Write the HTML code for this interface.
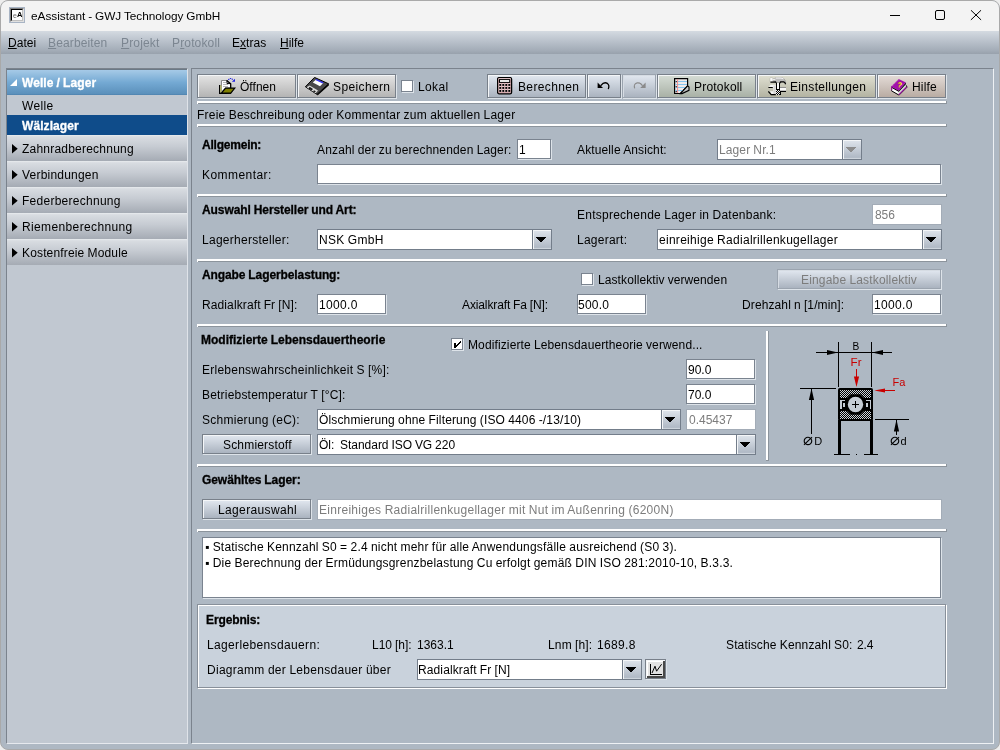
<!DOCTYPE html>
<html lang="de"><head><meta charset="utf-8"><title>eAssistant - GWJ Technology GmbH</title>
<style>
html,body{margin:0;padding:0;}
body{width:1000px;height:750px;overflow:hidden;background:#ededed;font-family:"Liberation Sans","DejaVu Sans",sans-serif;font-size:12px;line-height:14px;color:#000;position:relative;}
#win{position:absolute;left:0;top:0;width:998px;height:748px;border:1px solid #a9a9a9;border-radius:8px;overflow:hidden;background:#aeb8c3;}
#win div,#win svg,#win i{position:absolute;box-sizing:border-box;white-space:nowrap;}
#title{left:-1px;top:-1px;width:1000px;height:31px;background:#f3f3f3;}
#menu{left:-1px;top:30px;width:1000px;height:23px;background:linear-gradient(#d4dae1 0%,#b9c1cb 45%,#a3acb7 85%,#98a1ac 100%);}
.dis{color:#7c8691;}
u{text-decoration:underline;text-underline-offset:1px;}
.t{line-height:14px;will-change:transform;word-spacing:-0.34px;}
.b{font-weight:bold;-webkit-text-stroke:0.3px currentColor;}
.w{color:#fff;}
.g{color:#7c7c7c;}
.fld{background:#fff;border:1px solid #7a838f;box-shadow:1px 1px 0 #dde3e9;}
.fld.off{border-color:#a3acb7;box-shadow:none;}
.btn{border:1px solid #78808a;box-shadow:1px 1px 0 #dde3e9;}
.btn.off{border-color:#9ba4af;}
.btn.off i{border-color:#d6dce3;}
.btn i{left:0;top:0;right:0;bottom:0;border-left:1px solid #f4f6f8;border-top:1px solid #f4f6f8;}
.sep{left:196px;width:750px;height:3px;background:#fff;border-bottom:1px solid #8c949c;border-right:1px solid #8c949c;}
.sep:before{content:"";position:absolute;left:0;bottom:-1px;width:1px;height:1px;background:#fff;}
.cb{width:12px;height:12px;background:#fff;border:1px solid #7a838f;box-shadow:1px 1px 0 #dde3e9;}
.arrow{width:0;height:0;border-left:5px solid transparent;border-right:5px solid transparent;border-top:6px solid #000;}
.cmb{background:#fff;border:1px solid #737d8a;}
.cbtn{width:19px;border-left:1px solid #737d8a;background:linear-gradient(#dfe5ec,#b0b9c5 92%,#ccd3db 93%);}
.cbtn i{left:0;top:0;right:0;bottom:0;border-left:1px solid #f4f6f8;border-top:1px solid #f4f6f8;}
</style></head>
<body>
<div id="win">
<div id="title"></div>
<div id="ticon" style="left:8px;top:6px;width:16px;height:16px;background:#a8b4c4;"><div style="left:1px;top:1px;width:14px;height:14px;border:1px solid #e0e0e0;border-top-color:#808080;border-left-color:#808080;"></div><div style="left:2px;top:2px;width:12px;height:12px;background:#fff;border:1px solid #c0c0c0;border-top-color:#000;border-left-color:#000;"></div><div style="left:3.6px;top:5.4px;font-size:7px;line-height:8px;color:#666;will-change:transform;">e</div><div style="left:7.6px;top:4px;font-size:7.5px;line-height:8px;font-weight:bold;color:#000;will-change:transform;">A</div></div>
<div class="t " style="left:30px;top:8px;letter-spacing:-0.016px;font-size:11.8px;">eAssistant - GWJ Technology GmbH</div>
<div style="left:889px;top:14px;width:10px;height:1px;background:#000;"></div>
<div style="left:934px;top:9px;width:10px;height:10px;border:1px solid #000;border-radius:2px;"></div>
<svg style="left:969px;top:9px;" width="12" height="12" viewBox="0 0 12 12"><path d="M0.9 0.2L11.1 9.9M11.1 0.2L0.9 9.9" stroke="#000" stroke-width="1" fill="none"/></svg>
<div id="menu"></div>
<div class="t " style="left:7px;top:35px;letter-spacing:0.050px;"><u>D</u>atei</div>
<div class="t dis" style="left:47px;top:35px;letter-spacing:0.133px;"><u>B</u>earbeiten</div>
<div class="t dis" style="left:120px;top:35px;letter-spacing:0.167px;"><u>P</u>rojekt</div>
<div class="t dis" style="left:171px;top:35px;letter-spacing:0.150px;">P<u>r</u>otokoll</div>
<div class="t " style="left:231px;top:35px;letter-spacing:0.040px;">E<u>x</u>tras</div>
<div class="t " style="left:279px;top:35px;"><u>H</u>ilfe</div>
<div style="left:5px;top:67px;width:182px;height:676px;background:#c1c8d1;border-left:1px solid #7b838d;border-top:1px solid #7b838d;border-right:1px solid #dfe3e9;border-bottom:1px solid #e6e9ee;"></div>
<div style="left:6px;top:68px;width:180px;height:26px;border-top:1px solid #6b7986;background:linear-gradient(#a6cae7 0%,#74a9d3 50%,#5c91bc 94%,#4e82ae 100%);"></div>
<div style="left:9px;top:78px;width:0;height:0;border-left:7px solid transparent;border-bottom:7px solid #fff;"></div>
<div class="t b w" style="left:21px;top:75px;letter-spacing:0.083px;">Welle / Lager</div>
<div class="t " style="left:21px;top:98px;letter-spacing:0.350px;">Welle</div>
<div style="left:6px;top:114px;width:180px;height:20px;background:#0f4c8a;"></div>
<div class="t b w" style="left:21px;top:118px;letter-spacing:0.075px;">Wälzlager</div>
<div style="left:6px;top:134px;width:180px;height:26px;background:linear-gradient(#e9ecef 0%,#d8dce1 7%,#c6cbd2 45%,#a5abb4 100%);"></div>
<svg style="left:11px;top:143px;" width="7" height="10" viewBox="0 0 7 10"><path d="M0 0L5.7 4.7L0 9.4Z" fill="#000"/></svg>
<div class="t " style="left:21px;top:141px;letter-spacing:0.219px;">Zahnradberechnung</div>
<div style="left:6px;top:160px;width:180px;height:26px;background:linear-gradient(#e9ecef 0%,#d8dce1 7%,#c6cbd2 45%,#a5abb4 100%);"></div>
<svg style="left:11px;top:169px;" width="7" height="10" viewBox="0 0 7 10"><path d="M0 0L5.7 4.7L0 9.4Z" fill="#000"/></svg>
<div class="t " style="left:21px;top:167px;letter-spacing:0.209px;">Verbindungen</div>
<div style="left:6px;top:186px;width:180px;height:26px;background:linear-gradient(#e9ecef 0%,#d8dce1 7%,#c6cbd2 45%,#a5abb4 100%);"></div>
<svg style="left:11px;top:195px;" width="7" height="10" viewBox="0 0 7 10"><path d="M0 0L5.7 4.7L0 9.4Z" fill="#000"/></svg>
<div class="t " style="left:21px;top:193px;letter-spacing:0.264px;">Federberechnung</div>
<div style="left:6px;top:212px;width:180px;height:26px;background:linear-gradient(#e9ecef 0%,#d8dce1 7%,#c6cbd2 45%,#a5abb4 100%);"></div>
<svg style="left:11px;top:221px;" width="7" height="10" viewBox="0 0 7 10"><path d="M0 0L5.7 4.7L0 9.4Z" fill="#000"/></svg>
<div class="t " style="left:21px;top:219px;letter-spacing:0.367px;">Riemenberechnung</div>
<div style="left:6px;top:238px;width:180px;height:26px;background:linear-gradient(#e9ecef 0%,#d8dce1 7%,#c6cbd2 45%,#a5abb4 100%);"></div>
<svg style="left:11px;top:247px;" width="7" height="10" viewBox="0 0 7 10"><path d="M0 0L5.7 4.7L0 9.4Z" fill="#000"/></svg>
<div class="t " style="left:21px;top:245px;letter-spacing:0.153px;">Kostenfreie Module</div>
<div style="left:190px;top:67px;width:803px;height:676px;border-left:1px solid #7b838d;border-top:1px solid #7b838d;border-right:1px solid #eef1f4;border-bottom:1px solid #eef1f4;"></div>
<div class="btn " style="left:196px;top:73px;width:99px;height:24px;background:linear-gradient(#e4e4e4,#b4b4b4);"><i></i></div>
<svg style="left:218px;top:77px;" width="17" height="17" viewBox="0 0 17 17" >
<path d="M2.5 2.5H8L11.5 5.6V10H6.5L2.5 13.8Z" fill="#fff" stroke="#8a8a8a" stroke-width="1"/>
<path d="M4 4.5h3M4 6.5h5M4 8.5h5" stroke="#b8b8b8" stroke-width="1"/>
<path d="M8 2.6V5.6H11.5" fill="none" stroke="#000" stroke-width="1"/>
<path d="M7.6 2.4L11.7 5.8V10" fill="none" stroke="#000" stroke-width="1.3"/>
<path d="M0.7 7V15.4H12" stroke="#000" stroke-width="1.4" fill="none"/>
<path d="M1.9 7.4V14.4" stroke="#d6d65a" stroke-width="1"/>
<path d="M2.6 14.8L6.6 10.1H15.8L11.8 15.2Z" fill="#808000" stroke="#000" stroke-width="1.2" stroke-linejoin="miter"/>
<path d="M9.3 2Q11.5 -1 13.9 1.8" stroke="#2828e0" stroke-width="1.1" fill="none" stroke-dasharray="1.3 0.7"/>
<path d="M12.8 3.7H16V0.7Z" fill="#2020e0"/>
</svg>
<div class="t " style="left:239.2px;top:79px;letter-spacing:0.040px;">Öffnen</div>
<div class="btn " style="left:296px;top:73px;width:99px;height:24px;background:linear-gradient(#e4e4e4,#b4b4b4);"><i></i></div>
<svg style="left:304px;top:76px;" width="25" height="19" viewBox="0 0 25 19" >
<path d="M9.5 0.4L23.6 6.8L12 17.4L0.4 9.8Z" fill="#4a4a4a" stroke="#000" stroke-width="1"/>
<path d="M23.6 6.8L12 17.4L12.6 18.5L24 8.2Z" fill="#000"/>
<path d="M10.8 2.7L18.2 6L15 9.3L7.8 5.6Z" fill="#fff"/>
<path d="M11.3 1.9L18.6 5.2L17.7 6.4L10.4 3Z" fill="#3434f4"/>
<path d="M1.6 10.3L4.6 8.4L13 13.4L10.6 16.3Z" fill="#dcdcdc"/>
<path d="M4.6 9.8L8 11.9L6.6 13.5L3.4 11.4Z" fill="#1c1c1c"/>
<path d="M9 13.2L10.8 14.2L9.8 15.4L8 14.4Z" fill="#1c1c1c"/>
</svg>
<div class="t " style="left:332.4px;top:79px;letter-spacing:0.375px;">Speichern</div>
<div class="cb" style="left:400px;top:79px;"></div>
<div class="t " style="left:417.4px;top:79px;letter-spacing:0.350px;">Lokal</div>
<div class="btn " style="left:486px;top:73px;width:99px;height:24px;background:linear-gradient(#e2e8f0,#aab3bf);"><i></i></div>
<svg style="left:496px;top:76px;" width="16" height="18" viewBox="0 0 16 18" >
<rect x="0.6" y="0.6" width="14" height="16.2" rx="1.6" fill="#d7abaf" stroke="#000" stroke-width="1.3"/>
<rect x="1.4" y="1.3" width="12.4" height="1.3" fill="#f3d9dc"/>
<rect x="2.5" y="2.6" width="10.2" height="2.8" fill="#fff" stroke="#000" stroke-width="1"/>
<rect x="1.8" y="6.5" width="2.2" height="2.2" fill="#f4e4e6"/><rect x="2.3" y="7.0" width="1.9" height="1.9" fill="#000"/><rect x="4.8" y="6.5" width="2.2" height="2.2" fill="#f4e4e6"/><rect x="5.3" y="7.0" width="1.9" height="1.9" fill="#000"/><rect x="7.8" y="6.5" width="2.2" height="2.2" fill="#f4e4e6"/><rect x="8.3" y="7.0" width="1.9" height="1.9" fill="#000"/><rect x="10.8" y="6.5" width="2.2" height="2.2" fill="#f4e4e6"/><rect x="11.3" y="7.0" width="1.9" height="1.9" fill="#000"/><rect x="1.8" y="9.5" width="2.2" height="2.2" fill="#f4e4e6"/><rect x="2.3" y="10.0" width="1.9" height="1.9" fill="#000"/><rect x="4.8" y="9.5" width="2.2" height="2.2" fill="#f4e4e6"/><rect x="5.3" y="10.0" width="1.9" height="1.9" fill="#000"/><rect x="7.8" y="9.5" width="2.2" height="2.2" fill="#f4e4e6"/><rect x="8.3" y="10.0" width="1.9" height="1.9" fill="#000"/><rect x="10.8" y="9.5" width="2.2" height="2.2" fill="#f4e4e6"/><rect x="11.3" y="10.0" width="1.9" height="1.9" fill="#000"/><rect x="1.8" y="12.5" width="2.2" height="2.2" fill="#f4e4e6"/><rect x="2.3" y="13.0" width="1.9" height="1.9" fill="#000"/><rect x="4.8" y="12.5" width="2.2" height="2.2" fill="#f4e4e6"/><rect x="5.3" y="13.0" width="1.9" height="1.9" fill="#000"/><rect x="7.8" y="12.5" width="2.2" height="2.2" fill="#f4e4e6"/><rect x="8.3" y="13.0" width="1.9" height="1.9" fill="#000"/><rect x="10.8" y="12.5" width="2.2" height="2.2" fill="#f4e4e6"/><rect x="11.3" y="13.0" width="1.9" height="1.9" fill="#000"/></svg>
<div class="t " style="left:516.6px;top:79px;letter-spacing:0.362px;">Berechnen</div>
<div class="btn " style="left:586px;top:73px;width:34px;height:24px;background:linear-gradient(#e2e8f0,#aab3bf);"><i></i></div>
<svg style="left:595px;top:79px;" width="16" height="12" viewBox="0 0 16 12" >
<path d="M1.6 2.6V8H7Z" fill="#000"/>
<path d="M5 5.4Q8 1.5 11.4 3.4Q13.7 5.2 12.4 8.6" fill="none" stroke="#000" stroke-width="1.3" stroke-linecap="round"/>
</svg>
<div class="btn off" style="left:621px;top:73px;width:34px;height:24px;background:linear-gradient(#e2e8f0,#aab3bf);"><i></i></div>
<svg style="left:631px;top:79px;" width="16" height="12" viewBox="0 0 16 12" >
<path d="M13.6 2.6V8H8.2Z" fill="#8a8a8a"/>
<path d="M10.2 5.4Q7.2 1.5 3.8 3.4Q1.5 5.2 2.8 8.6" fill="none" stroke="#8a8a8a" stroke-width="1.2" stroke-linecap="round" stroke-dasharray="2.4 0.9"/>
</svg>
<div class="btn " style="left:656px;top:73px;width:99px;height:24px;background:linear-gradient(#d6ddd6,#a9b1a6);"><i></i></div>
<svg style="left:673px;top:77px;" width="17" height="17" viewBox="0 0 17 17" >
<path d="M0.6 0.6H13.6V7.8L6.4 15.5H0.6Z" fill="#eeeaea" stroke="#000" stroke-width="1.2"/>
<path d="M1.3 3.5H13M1.3 6.5H13M1.3 9.5H11.4M1.3 12.5H8.6" stroke="#86c4ee" stroke-width="1"/>
<path d="M3.6 1.2V14.9" stroke="#f08c8c" stroke-width="1"/>
<path d="M1.7 3h1v1.2h-1zM1.7 8h1v1.2h-1zM1.7 13h1v1.2h-1z" fill="#000"/>
<path d="M13.6 7.8L15 9V12.3L8 15.6H6.4Z" fill="#c6c6c6" stroke="#000" stroke-width="1.1"/>
</svg>
<div class="t " style="left:693.4px;top:79px;letter-spacing:0.200px;">Protokoll</div>
<div class="btn " style="left:756px;top:73px;width:119px;height:24px;background:linear-gradient(#e0e0d2,#b3b3a2);"><i></i></div>
<svg style="left:767px;top:76px;" width="19" height="19" viewBox="0 0 19 19" >
<defs><pattern id="chk2" width="2" height="2" patternUnits="userSpaceOnUse"><rect width="2" height="2" fill="#000"/><rect x="1" y="0" width="1" height="1" fill="#f0f0f0"/><rect x="0" y="1" width="1" height="1" fill="#f0f0f0"/></pattern></defs>
<path d="M2.2 1.1H4.6V1.9H7.4V0.4H13.2L15.8 1.6L17.4 3.8L17.7 6.4L16.2 4.6L13.2 4.4V5.6H7.4V4.4H4.6V4.7H2.2Z" fill="#bdbdbd" stroke="#8a8a8a" stroke-width="0.5"/>
<path d="M2.2 1.1H4.6V4.7H2.2Z" fill="#f6f6f6"/>
<path d="M7.4 0.4H13.2L15.6 1.5V2.2L13 1.5H7.4Z" fill="#fbfbfb"/>
<path d="M4.6 1.9H7.4V3H4.6Z" fill="#ececec"/>
<path d="M2.4 5.1H5L7.6 4.9L8.4 6" stroke="#000" stroke-width="1.1" fill="none"/>
<path d="M11.8 6L12.6 4.9H15.8L17 5.8L17.6 7.2" stroke="#000" stroke-width="1.3" fill="none"/>
<g shape-rendering="crispEdges">
<rect x="8" y="6" width="4" height="7" fill="#000"/>
<rect x="9" y="6" width="2" height="7" fill="#f6f6f6"/>
<rect x="8" y="12" width="5" height="6" fill="#000"/>
<rect x="8" y="13" width="4" height="5" fill="url(#chk2)"/>
<rect x="12" y="10" width="6" height="1" fill="#909090"/>
<rect x="12" y="11" width="6" height="2" fill="#fafafa"/>
<rect x="12" y="13" width="6" height="1" fill="#c4c4c4"/>
<rect x="12" y="14" width="6" height="1" fill="#000"/>
</g>
<path d="M1 9.8L2.6 7.7H6.8L7.8 8.6V17L6.8 17.4H3.4L2 14.2H5.2V11H1Z" fill="#f2f2f2"/>
<path d="M5.4 8.4H7.6V17H5.4Z" fill="#d4d4d4"/>
<path d="M0.4 10.5H4.8" stroke="#000" stroke-width="1.2"/>
<path d="M0.3 14.4L3.2 17.6H7.8" stroke="#000" stroke-width="1.3" fill="none"/>
</svg>
<div class="t " style="left:788.6px;top:79px;letter-spacing:0.333px;">Einstellungen</div>
<div class="btn " style="left:876px;top:73px;width:69px;height:24px;background:linear-gradient(#e4dcd8,#b9aca3);"><i></i></div>
<svg style="left:890px;top:78px;" width="17" height="17" viewBox="0 0 17 17" >
<path d="M0.9 9L7.7 12.8V15.5L0.9 11.9Z" fill="#fff"/>
<path d="M7.7 12.8L14.8 5.3L15.5 7.8L7.9 15.6Z" fill="#d2d6d2"/>
<path d="M0.2 7.4V11.5L1 11.9V9L7.7 12.8L14.9 5.2V3.6L7.7 11.6Z" fill="#000"/>
<path d="M0.5 11.8L7.4 15.8H8.4L16 8.2L15.3 6.4" stroke="#000" stroke-width="1" fill="none"/>
<path d="M7.9 15.6L15.6 7.9" stroke="#a010a8" stroke-width="1.1"/>
<path d="M7.7 0L14.9 3.6L7.7 11.7L0.2 7.5Z" fill="#a212aa"/>
<path d="M0.7 7.6V11.3" stroke="#a212aa" stroke-width="1.2"/>
<path d="M1.6 6.6L7.6 0.6" stroke="#d9a0dc" stroke-width="0.9" stroke-dasharray="0.8 0.8"/>
<text x="6.4" y="8.4" font-family="Liberation Sans, sans-serif" font-size="7.5" font-weight="bold" fill="#ffff00" transform="rotate(12 8 6)">?</text>
</svg>
<div class="t " style="left:911px;top:79px;letter-spacing:0.150px;">Hilfe</div>
<div class="sep" style="top:100px;"></div>
<div class="t " style="left:196px;top:107px;letter-spacing:0.231px;">Freie Beschreibung oder Kommentar zum aktuellen Lager</div>
<div class="sep" style="top:123px;"></div>
<div class="t b" style="left:201px;top:137px;letter-spacing:-0.222px;">Allgemein:</div>
<div class="t " style="left:316px;top:142px;letter-spacing:0.156px;">Anzahl der zu berechnenden Lager:</div>
<div class="fld " style="left:516px;top:138px;width:34px;height:20px;"></div>
<div class="t " style="left:518px;top:142px;">1</div>
<div class="t " style="left:576px;top:142px;letter-spacing:0.125px;">Aktuelle Ansicht:</div>
<div class="cmb" style="left:716px;top:138px;width:145px;height:21px;"><div class="cbtn" style="right:0;top:0;height:19px;"><i></i><svg style="left:3px;top:7px;" width="10" height="6" viewBox="0 0 10 6" shape-rendering="crispEdges"><path d="M0 0h10v1h-1v1h-1v1h-1v1h-1v1h-2v-1h-1v-1h-1v-1h-1v-1h-1z" fill="#8c8c8c"/></svg></div></div>
<div class="t g" style="left:718px;top:142px;letter-spacing:0.111px;">Lager Nr.1</div>
<div class="t " style="left:201px;top:167px;letter-spacing:0.444px;">Kommentar:</div>
<div class="fld " style="left:316px;top:163px;width:624px;height:20px;"></div>
<div class="sep" style="top:193px;"></div>
<div class="t b" style="left:201px;top:202px;letter-spacing:-0.077px;">Auswahl Hersteller und Art:</div>
<div class="t " style="left:576px;top:207px;letter-spacing:0.250px;">Entsprechende Lager in Datenbank:</div>
<div class="fld off" style="left:871px;top:203px;width:70px;height:21px;"></div>
<div class="t g" style="left:874px;top:207px;letter-spacing:-0.100px;">856</div>
<div class="t " style="left:201px;top:232px;letter-spacing:0.267px;">Lagerhersteller:</div>
<div class="cmb" style="left:316px;top:228px;width:235px;height:21px;"><div class="cbtn" style="right:0;top:0;height:19px;"><i></i><svg style="left:3px;top:7px;" width="10" height="6" viewBox="0 0 10 6" shape-rendering="crispEdges"><path d="M0 0h10v1h-1v1h-1v1h-1v1h-1v1h-2v-1h-1v-1h-1v-1h-1v-1h-1z" fill="#000"/></svg></div></div>
<div class="t " style="left:318px;top:232px;letter-spacing:0.286px;">NSK GmbH</div>
<div class="t " style="left:576px;top:232px;letter-spacing:0.250px;">Lagerart:</div>
<div class="cmb" style="left:656px;top:228px;width:285px;height:21px;"><div class="cbtn" style="right:0;top:0;height:19px;"><i></i><svg style="left:3px;top:7px;" width="10" height="6" viewBox="0 0 10 6" shape-rendering="crispEdges"><path d="M0 0h10v1h-1v1h-1v1h-1v1h-1v1h-2v-1h-1v-1h-1v-1h-1v-1h-1z" fill="#000"/></svg></div></div>
<div class="t " style="left:658px;top:232px;letter-spacing:0.281px;">einreihige Radialrillenkugellager</div>
<div class="sep" style="top:258px;"></div>
<div class="t b" style="left:201px;top:267px;letter-spacing:-0.095px;">Angabe Lagerbelastung:</div>
<div class="cb" style="left:580px;top:272px;"></div>
<div class="t " style="left:597px;top:272px;letter-spacing:0.091px;">Lastkollektiv verwenden</div>
<div class="btn off" style="left:776px;top:268px;width:164px;height:20px;background:linear-gradient(#e2e8f0,#aab3bf);"><i></i></div>
<div class="t g" style="left:800px;top:272px;letter-spacing:0.170px;">Eingabe Lastkollektiv</div>
<div class="t " style="left:201px;top:297px;letter-spacing:0.111px;">Radialkraft Fr [N]:</div>
<div class="fld " style="left:316px;top:293px;width:69px;height:20px;"></div>
<div class="t " style="left:318px;top:297px;letter-spacing:0.350px;">1000.0</div>
<div class="t " style="left:461px;top:297px;letter-spacing:-0.118px;">Axialkraft Fa [N]:</div>
<div class="fld " style="left:576px;top:293px;width:69px;height:20px;"></div>
<div class="t " style="left:577px;top:297px;letter-spacing:0.250px;">500.0</div>
<div class="t " style="left:741px;top:297px;letter-spacing:0.111px;">Drehzahl n [1/min]:</div>
<div class="fld " style="left:871px;top:293px;width:69px;height:20px;"></div>
<div class="t " style="left:873px;top:297px;letter-spacing:0.350px;">1000.0</div>
<div class="sep" style="top:323px;"></div>
<div class="t b" style="left:200px;top:332px;">Modifizierte Lebensdauertheorie</div>
<div class="cb" style="left:450px;top:337px;"><svg style="left:-1px;top:-1px;" width="13" height="13" viewBox="0 0 13 13" shape-rendering="crispEdges"><path d="M3 5h2v5h-2zM5 7h1v2h-1zM6 6h1v2h-1zM7 5h1v2h-1zM8 4h1v2h-1zM9 3h1v2h-1z" fill="#000"/></svg></div>
<div class="t " style="left:467px;top:337px;letter-spacing:0.122px;">Modifizierte Lebensdauertheorie verwend...</div>
<div class="t " style="left:201px;top:362px;letter-spacing:0.250px;">Erlebenswahrscheinlichkeit S [%]:</div>
<div class="fld " style="left:685px;top:358px;width:69px;height:20px;"></div>
<div class="t " style="left:687px;top:362px;">90.0</div>
<div class="t " style="left:201px;top:387px;letter-spacing:0.200px;">Betriebstemperatur T [°C]:</div>
<div class="fld " style="left:685px;top:383px;width:69px;height:20px;"></div>
<div class="t " style="left:687px;top:387px;">70.0</div>
<div class="t " style="left:201px;top:412px;letter-spacing:0.267px;">Schmierung (eC):</div>
<div class="cmb" style="left:316px;top:408px;width:364px;height:21px;"><div class="cbtn" style="right:0;top:0;height:19px;"><i></i><svg style="left:3px;top:7px;" width="10" height="6" viewBox="0 0 10 6" shape-rendering="crispEdges"><path d="M0 0h10v1h-1v1h-1v1h-1v1h-1v1h-2v-1h-1v-1h-1v-1h-1v-1h-1z" fill="#000"/></svg></div></div>
<div class="t " style="left:318px;top:412px;letter-spacing:0.156px;">Ölschmierung ohne Filterung (ISO 4406 -/13/10)</div>
<div class="fld off" style="left:685px;top:408px;width:70px;height:21px;"></div>
<div class="t g" style="left:688px;top:412px;">0.45437</div>
<div class="btn " style="left:201px;top:433px;width:109px;height:20px;background:linear-gradient(#e2e8f0,#aab3bf);"><i></i></div>
<div class="t " style="left:222px;top:437px;letter-spacing:0.182px;">Schmierstoff</div>
<div class="cmb" style="left:316px;top:433px;width:439px;height:21px;"><div class="cbtn" style="right:0;top:0;height:19px;"><i></i><svg style="left:3px;top:7px;" width="10" height="6" viewBox="0 0 10 6" shape-rendering="crispEdges"><path d="M0 0h10v1h-1v1h-1v1h-1v1h-1v1h-2v-1h-1v-1h-1v-1h-1v-1h-1z" fill="#000"/></svg></div></div>
<div class="t " style="left:318px;top:437px;letter-spacing:-0.043px;">Öl:&nbsp; Standard ISO VG 220</div>
<div style="left:765px;top:330px;width:3px;height:130px;background:#fff;border-right:1px solid #8c949c;border-bottom:1px solid #8c949c;"></div>
<svg style="left:794px;top:334px;will-change:transform;" width="120" height="130" viewBox="795 335 120 130"><defs><pattern id="chk" width="2" height="2" patternUnits="userSpaceOnUse"><rect width="2" height="2" fill="#000"/><rect x="0" y="0" width="1" height="1" fill="#ccd2d9"/><rect x="1" y="1" width="1" height="1" fill="#ccd2d9"/></pattern></defs><g shape-rendering="crispEdges" fill="#000"><rect x="838" y="342" width="1" height="45"/><rect x="871" y="342" width="1" height="45"/><rect x="816" y="352" width="76" height="1"/><rect x="800" y="388" width="36" height="1"/><rect x="811" y="388" width="1" height="46"/><rect x="875" y="419" width="34" height="1"/><rect x="896" y="419" width="1" height="16"/><rect x="834" y="454" width="16" height="1"/><rect x="856" y="454" width="1" height="1"/><rect x="864" y="454" width="14" height="1"/><rect x="838" y="420" width="3" height="35"/><rect x="870" y="420" width="3" height="35"/></g><path d="M838 352.5L827 350.1V354.9Z M872 352.5L883 350.1V354.9Z M811.5 388.5L808.9 400H814.1Z M896.5 419.5L893.9 431.5H899.1Z" fill="#000"/><rect x="838" y="388" width="35" height="33" rx="2" fill="#000"/><rect x="840" y="390" width="31" height="8" fill="url(#chk)" shape-rendering="crispEdges"/><rect x="840" y="411" width="31" height="8" fill="url(#chk)" shape-rendering="crispEdges"/><path d="M850.6 394.2H860.4L866 399.8V409.2L860.4 414.8H850.6L845 409.2V399.8Z" fill="#000"/><circle cx="855.5" cy="404.5" r="7.7" fill="#c5ccd5"/><g shape-rendering="crispEdges" fill="#000"><rect x="852" y="404" width="7" height="1"/><rect x="855" y="401" width="1" height="7"/></g><g shape-rendering="crispEdges" fill="#c5ccd5"><rect x="840" y="400" width="1.5" height="9"/><rect x="840" y="400" width="5" height="1.4"/><rect x="843" y="402.5" width="2" height="4.5"/><rect x="869.5" y="400" width="1.5" height="9"/><rect x="866" y="400" width="5" height="1.4"/><rect x="866" y="402.5" width="2" height="4.5"/></g><g shape-rendering="crispEdges" fill="#c80000"><rect x="856" y="369" width="1" height="10"/><rect x="884" y="390" width="11" height="1"/></g><path d="M856.5 387L853.9 376.4H859.1Z M874.2 390.5L885 388.4V392.6Z" fill="#c80000"/><text x="852.6" y="349.7" font-family="Liberation Sans, sans-serif" font-size="10.2" fill="#000">B</text><text x="850.6" y="365.6" font-family="Liberation Sans, sans-serif" font-size="11.6" fill="#c80000">Fr</text><text x="892.6" y="386.4" font-family="Liberation Sans, sans-serif" font-size="11" fill="#c80000">Fa</text><text x="814.2" y="445.4" font-family="Liberation Sans, sans-serif" font-size="11" fill="#000">D</text><text x="900.4" y="445.4" font-family="Liberation Sans, sans-serif" font-size="11" fill="#000">d</text><text x="803" y="445.4" font-family="DejaVu Sans, sans-serif" font-size="16.5" fill="#000">⌀</text><text x="890" y="445.4" font-family="DejaVu Sans, sans-serif" font-size="16.5" fill="#000">⌀</text></svg>
<div class="sep" style="top:463px;"></div>
<div class="t b" style="left:201px;top:472px;letter-spacing:-0.067px;">Gewähltes Lager:</div>
<div class="btn " style="left:201px;top:498px;width:109px;height:20px;background:linear-gradient(#e2e8f0,#aab3bf);"><i></i></div>
<div class="t " style="left:217px;top:502px;letter-spacing:0.364px;">Lagerauswahl</div>
<div class="fld off" style="left:316px;top:498px;width:625px;height:21px;"></div>
<div class="t g" style="left:318px;top:502px;letter-spacing:0.274px;">Einreihiges Radialrillenkugellager mit Nut im Außenring (6200N)</div>
<div class="sep" style="top:528px;"></div>
<div class="fld " style="left:201px;top:536px;width:739px;height:61px;"></div>
<div class="t " style="left:204.2px;top:539px;letter-spacing:0.200px;">▪ Statische Kennzahl S0 = 2.4 nicht mehr für alle Anwendungsfälle ausreichend (S0 3).</div>
<div class="t " style="left:204.2px;top:555px;letter-spacing:0.202px;">▪ Die Berechnung der Ermüdungsgrenzbelastung Cu erfolgt gemäß DIN ISO 281:2010-10, B.3.3.</div>
<div style="left:196px;top:603px;width:749px;height:84px;background:#c9d2dc;border:1px solid #88909a;box-shadow:inset 1px 1px 0 #fff, 1px 1px 0 #fff;"></div>
<div class="t b" style="left:205px;top:612px;letter-spacing:-0.125px;">Ergebnis:</div>
<div class="t " style="left:206px;top:637px;letter-spacing:0.353px;">Lagerlebensdauern:</div>
<div class="t " style="left:371px;top:637px;">L10 [h]:</div>
<div class="t " style="left:416px;top:637px;">1363.1</div>
<div class="t " style="left:547px;top:637px;letter-spacing:0.143px;">Lnm [h]:</div>
<div class="t " style="left:596px;top:637px;letter-spacing:0.350px;">1689.8</div>
<div class="t " style="left:725px;top:637px;letter-spacing:0.143px;">Statische Kennzahl S0:</div>
<div class="t " style="left:856px;top:637px;letter-spacing:-0.100px;">2.4</div>
<div class="t " style="left:206px;top:662px;letter-spacing:0.286px;">Diagramm der Lebensdauer über</div>
<div class="cmb" style="left:416px;top:658px;width:225px;height:21px;"><div class="cbtn" style="right:0;top:0;height:19px;"><i></i><svg style="left:3px;top:7px;" width="10" height="6" viewBox="0 0 10 6" shape-rendering="crispEdges"><path d="M0 0h10v1h-1v1h-1v1h-1v1h-1v1h-2v-1h-1v-1h-1v-1h-1v-1h-1z" fill="#000"/></svg></div></div>
<div class="t " style="left:417px;top:662px;letter-spacing:0.118px;">Radialkraft Fr [N]</div>
<div class="btn " style="left:644px;top:658px;width:21px;height:20px;background:linear-gradient(#e4e4e4,#b4b4b4);"><i></i></div>
<svg style="left:646px;top:660px;" width="18" height="17" viewBox="0 0 18 17" >
<g shape-rendering="crispEdges">
<rect x="0" y="0" width="18" height="17" fill="#e2e2e2"/>
<rect x="0" y="0" width="18" height="1" fill="#fff"/><rect x="0" y="0" width="1" height="17" fill="#fff"/>
<rect x="16" y="0" width="2" height="17" fill="#484848"/><rect x="0" y="15" width="18" height="2" fill="#484848"/>
<rect x="3" y="3" width="1" height="11" fill="#000"/><rect x="3" y="13" width="12" height="1" fill="#000"/>
</g>
<path d="M5 12L8 5.2L9.6 10.2L14.6 3.2" stroke="#000" stroke-width="1" fill="none"/>
</svg>
</div>
</body></html>
